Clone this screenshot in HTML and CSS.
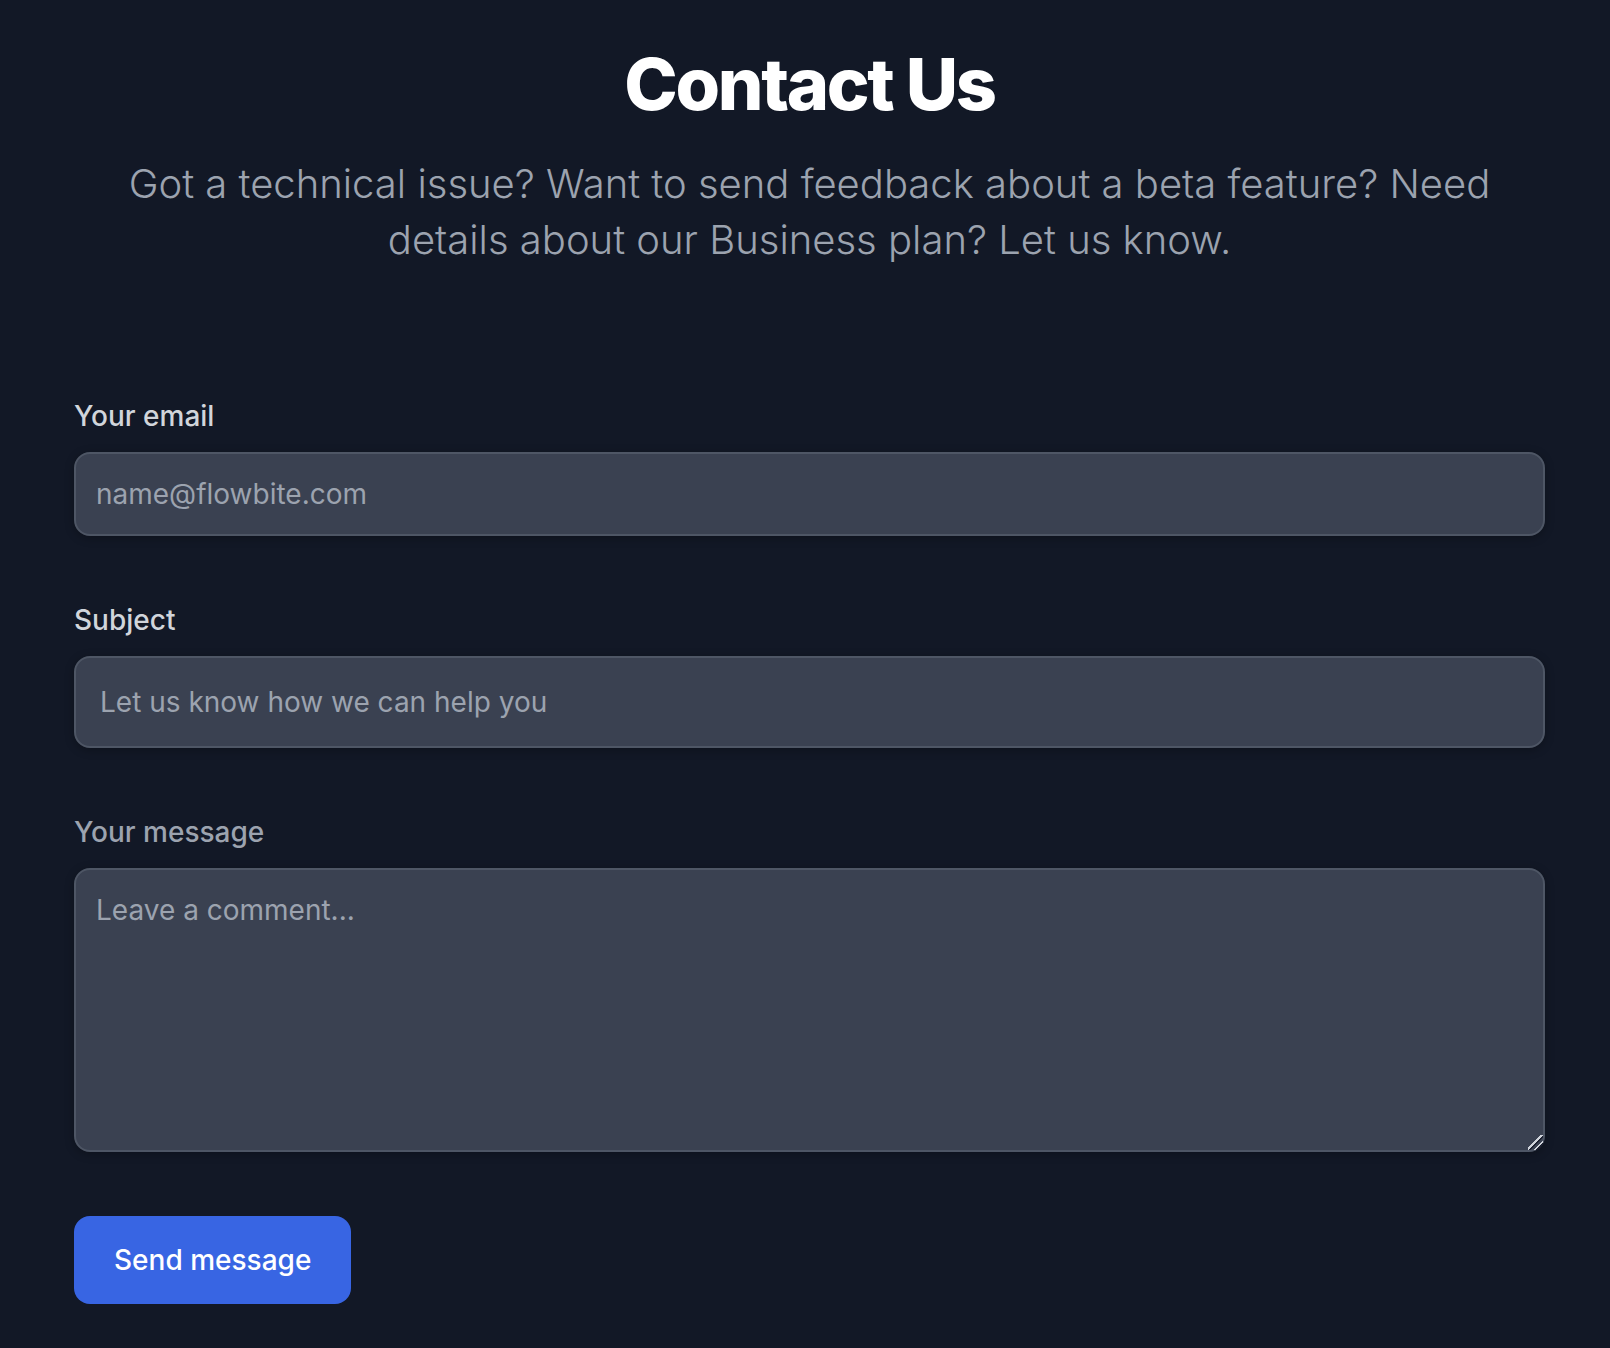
FILE: index.html
```html
<!DOCTYPE html>
<html lang="en">
<head>
<meta charset="utf-8">
<title>Contact Us</title>
<link rel="stylesheet" href="styles.css">
</head>
<body>
<section class="page">
  <div class="container">
    <h2 class="title">Contact Us</h2>
    <p class="lead">Got a technical issue? Want to send feedback about a beta feature? Need details about our Business plan? Let us know.</p>
    <form class="form" action="#">
      <div class="field">
        <label for="email" class="label">Your email</label>
        <input type="email" id="email" class="input input-email" placeholder="name@flowbite.com">
      </div>
      <div class="field">
        <label for="subject" class="label">Subject</label>
        <input type="text" id="subject" class="input input-subject" placeholder="Let us know how we can help you">
      </div>
      <div class="field">
        <label for="message" class="label label-muted">Your message</label>
        <textarea id="message" rows="6" class="input textarea" placeholder="Leave a comment..."></textarea>
      </div>
      <button type="submit" class="button">Send message</button>
    </form>
  </div>
</section>
</body>
</html>
```
FILE: styles.css
```css
* {
  box-sizing: border-box;
}

html, body {
  margin: 0;
  padding: 0;
  background: #121826;
}

body {
  font-family: Inter, "Noto Sans", "Liberation Sans", sans-serif;
  min-height: 1348px;
}

.page {
  background: #121826;
}

.container {
  padding: 44px 65px 44px 74px;
}

.title {
  margin: 0 0 32px;
  font-size: 72px;
  line-height: 80px;
  font-weight: 800;
  letter-spacing: -2.35px;
  color: #ffffff;
  text-align: center;
}

.lead {
  margin: 0 0 128px;
  font-size: 40px;
  line-height: 56px;
  font-weight: 300;
  color: #9ca3af;
  text-align: center;
}

.form {
  display: flex;
  flex-direction: column;
  gap: 64px;
}

.field {
  display: flex;
  flex-direction: column;
}

.label {
  display: block;
  margin-bottom: 16px;
  font-size: 28px;
  line-height: 40px;
  font-weight: 500;
  color: #d1d5db;
}

.label-muted {
  color: #9ca3af;
}

.input {
  display: block;
  width: 100%;
  margin: 0;
  background: #3a4151;
  border: 2px solid #4e5665;
  border-radius: 16px;
  color: #ffffff;
  font-family: Inter, "Noto Sans", "Liberation Sans", sans-serif;
  font-size: 28px;
  line-height: 40px;
  box-shadow: 0 2px 10px rgba(0, 0, 0, 0.28);
  outline: none;
}

.input::placeholder {
  color: #9ca3af;
  opacity: 1;
}

.input-email {
  height: 84px;
  padding: 20px;
}

.input-subject {
  height: 92px;
  padding: 24px;
}

.textarea {
  height: 284px;
  padding: 20px;
  resize: vertical;
}

.textarea::-webkit-resizer {
  background-color: transparent;
  background-image: linear-gradient(135deg,
    transparent 0 43%,
    #d0d4db 43% 52%,
    #1c2130 52% 57%,
    transparent 57% 67%,
    #d0d4db 67% 76%,
    #1c2130 76% 81%,
    transparent 81%);
}

.button {
  align-self: flex-start;
  height: 88px;
  padding: 0 40px;
  border: none;
  border-radius: 16px;
  background: #3865e3;
  color: #ffffff;
  font-family: Inter, "Noto Sans", "Liberation Sans", sans-serif;
  font-size: 28px;
  line-height: 40px;
  font-weight: 500;
  cursor: pointer;
}
```
